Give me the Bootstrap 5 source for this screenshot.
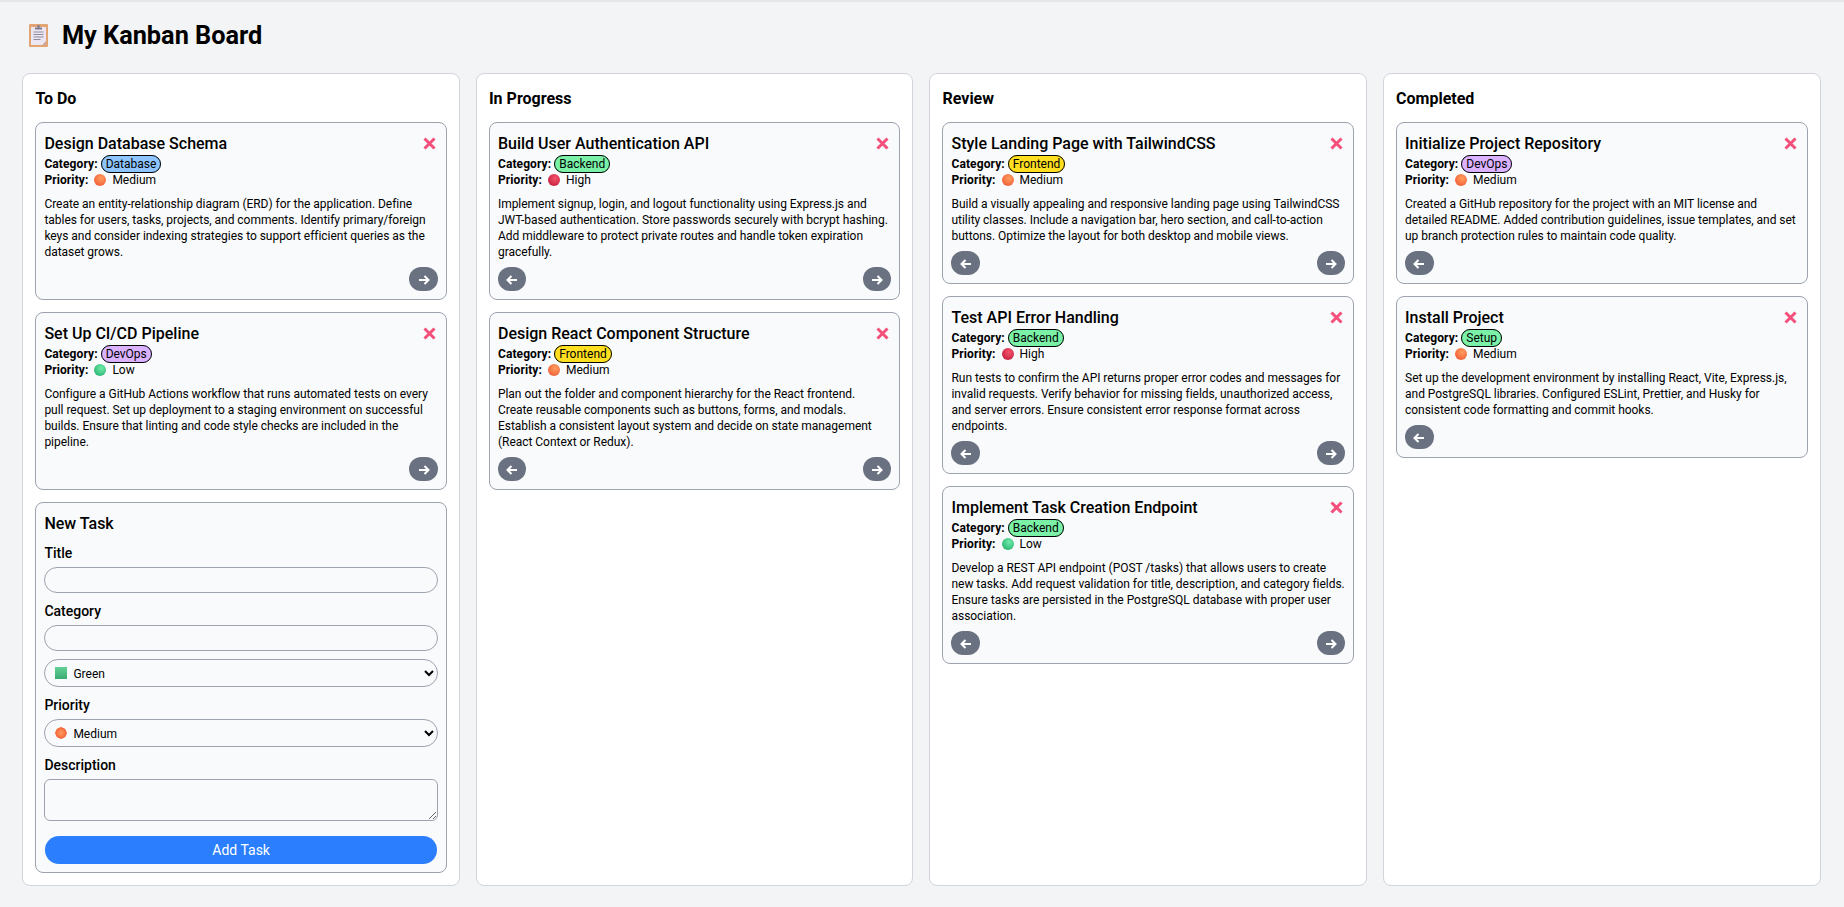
<!DOCTYPE html>
<html lang="en">

<head>
    <meta charset="UTF-8" />
    <meta name="viewport" content="width=device-width, initial-scale=1" />
    <title>My Kanban Board</title>
    <link href="https://cdn.jsdelivr.net/npm/bootstrap@5.3.0/dist/css/bootstrap.min.css" rel="stylesheet">

    <style>
        body {
            background-color: #f3f4f6;
            border-top: 2px solid #e5e7eb;
            font-family: Roboto, "Liberation Sans", sans-serif;
            color: #000;
            padding: 15px 23.4px 20px 22.4px;
        }

        .board-title {
            font-size: 25.3px;
            line-height: 36px;
            font-weight: 700;
            margin: 0 0 20px;
            gap: 14px;
            padding-left: 6.5px;
        }

        .board-title span {
            line-height: 34px;
            padding-top: 2px;
        }

        .board-column {
            background: #fff;
            border: 1px solid #d1d5db;
            border-radius: 8px;
            padding: 12px;
        }

        .column-title {
            font-size: 16px;
            line-height: 24px;
            font-weight: 700;
            padding-top: 1px;
            margin: 0 0 11px;
        }

        .task-stack {
            gap: 12px;
        }

        .task-box {
            background: #f9fafb;
            border: 1px solid #9ca3af;
            border-radius: 8px;
            padding: 8px;
            font-size: 12px;
            line-height: 16px;
        }

        .task-title {
            font-size: 16px;
            line-height: 24px;
            font-weight: 500;
            padding-top: 1px;
            margin: 0;
        }

        .task-meta b {
            font-weight: 700;
            letter-spacing: .1px;
        }

        .tag-pill {
            border: 1px solid #000;
            border-radius: 999px;
            padding: 1px 4px;
        }

        .tag-database { background: #8ec5ff; }
        .tag-backend { background: #7bf1a8; }
        .tag-frontend { background: #ffdf20; }
        .tag-devops { background: #dab2ff; }
        .tag-setup { background: #7bf1a8; }

        .prio-dot {
            width: 12px;
            height: 12px;
            margin: 0 3px;
            vertical-align: -2px;
        }

        .task-desc {
            margin: 8px 0 7px;
            letter-spacing: -.03px;
        }

        .move-btn {
            width: 28.5px;
            height: 24px;
            border: 0;
            border-radius: 999px;
            background: #6a7282;
            padding: 0;
        }

        .delete-btn {
            border: 0;
            background: none;
            padding: 0;
            margin: 6px 2px 0 0;
            width: 13px;
            height: 13px;
        }

        .form-heading {
            font-size: 16px;
            line-height: 24px;
            font-weight: 500;
            padding-top: 1px;
            margin: 0 0 7px;
        }

        .field-label {
            display: block;
            font-size: 14px;
            line-height: 20px;
            font-weight: 500;
            margin: 0 0 4px;
        }

        .field-input {
            display: block;
            width: 100%;
            height: 26px;
            border: 1px solid #9ca3af;
            border-radius: 999px;
            background: transparent;
            margin-bottom: 8px;
            font-size: 12px;
        }

        select.field-input {
            height: 28px;
            padding-left: 24px;
            padding-top: 2px;
            background-repeat: no-repeat;
            background-size: 12px 12px;
            background-position: 9.7px 7px;
        }

        .pick-green { background-image: linear-gradient(#63d196, #3aab72); }
        .pick-medium { background-image: radial-gradient(circle closest-side, #ff9a5c 0, #f4693d 90%, transparent 100%); }

        textarea.field-input {
            height: 42px;
            border-radius: 6px;
            margin-bottom: 15px;
        }

        .add-btn {
            width: calc(100% - 1.4px);
            height: 28px;
            margin: 0 .7px;
            border: 0;
            border-radius: 999px;
            background: #2b7fff;
            color: #fff;
            font-size: 14px;
            padding: 0;
        }
    </style>
</head>

<body>
    <svg width="0" height="0" class="position-absolute">
        <defs>
            <radialGradient id="dot-medium" cx="60%" cy="35%" r="70%"><stop offset="0" stop-color="#ff9d5e" /><stop offset="1" stop-color="#f1603a" /></radialGradient>
            <radialGradient id="dot-high" cx="60%" cy="35%" r="70%"><stop offset="0" stop-color="#f5536b" /><stop offset="1" stop-color="#c4213f" /></radialGradient>
            <radialGradient id="dot-low" cx="60%" cy="35%" r="70%"><stop offset="0" stop-color="#70eaa8" /><stop offset="1" stop-color="#2bb673" /></radialGradient>
        </defs>
    </svg>

    <h1 class="board-title d-flex align-items-center">
        <svg width="19" height="23" viewBox="0 0 19 23">
            <rect width="19" height="23" rx="1" fill="#e3a473" />
            <rect x="2" y="3" width="15" height="18" fill="#ece6f2" />
            <path d="M6 3.5h2.5V1h2v2.5H13V5.5H6z" fill="#7d7a8c" />
            <path d="M4.5 8h10M4.5 10.5h10M4.5 13h10M4.5 15.5h7" stroke="#8f8ca0" stroke-width="1" />
            <path d="M13 21l4-4v4z" fill="#c9a9a0" />
        </svg>
        <span>My Kanban Board</span>
    </h1>

    <div class="row row-cols-4 g-3" id="board"></div>

    <script src="https://cdn.jsdelivr.net/npm/bootstrap@5.3.0/dist/js/bootstrap.bundle.min.js"></script>

    <script>
        const columns = [
            { name: 'To Do', tasks: [
                { title: 'Design Database Schema', tag: 'Database', prio: 'Medium', desc: 'Create an entity-relationship diagram (ERD) for the application. Define tables for users, tasks, projects, and comments. Identify primary/foreign keys and consider indexing strategies to support efficient queries as the dataset grows.' },
                { title: 'Set Up CI/CD Pipeline', tag: 'DevOps', prio: 'Low', desc: 'Configure a GitHub Actions workflow that runs automated tests on every pull request. Set up deployment to a staging environment on successful builds. Ensure that linting and code style checks are included in the pipeline.' }
            ] },
            { name: 'In Progress', tasks: [
                { title: 'Build User Authentication API', tag: 'Backend', prio: 'High', desc: 'Implement signup, login, and logout functionality using Express.js and JWT-based authentication. Store passwords securely with bcrypt hashing. Add middleware to protect private routes and handle token expiration gracefully.' },
                { title: 'Design React Component Structure', tag: 'Frontend', prio: 'Medium', desc: 'Plan out the folder and component hierarchy for the React frontend. Create reusable components such as buttons, forms, and modals. Establish a consistent layout system and decide on state management (React Context or Redux).' }
            ] },
            { name: 'Review', tasks: [
                { title: 'Style Landing Page with TailwindCSS', tag: 'Frontend', prio: 'Medium', desc: 'Build a visually appealing and responsive landing page using TailwindCSS utility classes. Include a navigation bar, hero section, and call-to-action buttons. Optimize the layout for both desktop and mobile views.' },
                { title: 'Test API Error Handling', tag: 'Backend', prio: 'High', desc: 'Run tests to confirm the API returns proper error codes and messages for invalid requests. Verify behavior for missing fields, unauthorized access, and server errors. Ensure consistent error response format across endpoints.' },
                { title: 'Implement Task Creation Endpoint', tag: 'Backend', prio: 'Low', desc: 'Develop a REST API endpoint (POST /tasks) that allows users to create new tasks. Add request validation for title, description, and category fields. Ensure tasks are persisted in the PostgreSQL database with proper user association.' }
            ] },
            { name: 'Completed', tasks: [
                { title: 'Initialize Project Repository', tag: 'DevOps', prio: 'Medium', desc: 'Created a GitHub repository for the project with an MIT license and detailed README. Added contribution guidelines, issue templates, and set up branch protection rules to maintain code quality.' },
                { title: 'Install Project', tag: 'Setup', prio: 'Medium', desc: 'Set up the development environment by installing React, Vite, Express.js, and PostgreSQL libraries. Configured ESLint, Prettier, and Husky for consistent code formatting and commit hooks.' }
            ] }
        ];

        const arrowRight = '<svg width="12" height="12" viewBox="0 0 12 12"><path d="M1 6h9M6.5 2l4 4-4 4" fill="none" stroke="#fff" stroke-width="2" /></svg>';
        const arrowLeft = '<svg width="12" height="12" viewBox="0 0 12 12"><path d="M11 6H2M5.5 2l-4 4 4 4" fill="none" stroke="#fff" stroke-width="2" /></svg>';
        const cross = '<svg width="13" height="13" viewBox="0 0 13 13" class="d-block"><path d="M1.5 1.5l10 10M11.5 1.5l-10 10" stroke="#f5507c" stroke-width="3" /></svg>';

        function taskHtml(task, colIndex) {
            const canBack = colIndex > 0;
            const canNext = colIndex < columns.length - 1;
            return `
                <div class="task-box">
                    <div class="d-flex justify-content-between align-items-start">
                        <h3 class="task-title">${task.title}</h3>
                        <button type="button" class="delete-btn" aria-label="Delete">${cross}</button>
                    </div>
                    <div class="task-meta"><b>Category:</b> <span class="tag-pill tag-${task.tag.toLowerCase()}">${task.tag}</span></div>
                    <div class="task-meta"><b>Priority:</b> <svg class="prio-dot" viewBox="0 0 12 12"><circle cx="6" cy="6" r="6" fill="url(#dot-${task.prio.toLowerCase()})" /></svg> ${task.prio}</div>
                    <p class="task-desc">${task.desc}</p>
                    <div class="d-flex justify-content-between">
                        ${canBack ? `<button type="button" class="move-btn" aria-label="Back">${arrowLeft}</button>` : '<span></span>'}
                        ${canNext ? `<button type="button" class="move-btn" aria-label="Next">${arrowRight}</button>` : ''}
                    </div>
                </div>`;
        }

        const formHtml = `
            <form class="task-box">
                <h3 class="form-heading">New Task</h3>
                <label class="field-label">Title</label>
                <input type="text" class="field-input" />
                <label class="field-label">Category</label>
                <input type="text" class="field-input" />
                <select class="field-input pick-green"><option>Green</option></select>
                <label class="field-label">Priority</label>
                <select class="field-input pick-medium"><option>Medium</option></select>
                <label class="field-label">Description</label>
                <textarea class="field-input"></textarea>
                <button type="button" class="add-btn">Add Task</button>
            </form>`;

        document.getElementById('board').innerHTML = columns.map((col, i) => `
            <div class="col">
                <div class="board-column h-100">
                    <h2 class="column-title">${col.name}</h2>
                    <div class="d-flex flex-column task-stack">
                        ${col.tasks.map(t => taskHtml(t, i)).join('')}
                        ${i === 0 ? formHtml : ''}
                    </div>
                </div>
            </div>`).join('');
    </script>
</body>

</html>
